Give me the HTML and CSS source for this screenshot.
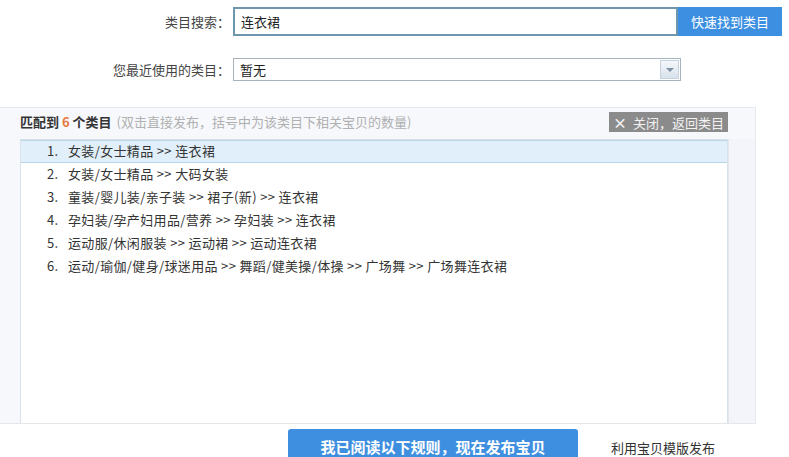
FILE: index.html
```html
<!DOCTYPE html>
<html>
<head>
    <meta charset="utf-8">
    <title>选择类目</title>
    <link rel="stylesheet" href="styles.css">
</head>
<body>
    <div class="search">
        <div class="row">
            <label class="label">类目搜索：</label>
            <input class="keyword" type="text" value="连衣裙">
            <button class="find-btn">快速找到类目</button>
        </div>
        <div class="row recent">
            <label class="label">您最近使用的类目：</label>
            <div class="select">
                <span>暂无</span>
                <span class="arrow"></span>
            </div>
        </div>
    </div>

    <div class="result">
        <div class="result-head">
            <span class="count">匹配到 <em>6</em> 个类目</span>
            <span class="tip">(双击直接发布，括号中为该类目下相关宝贝的数量)</span>
            <button class="close-btn"><b>×</b> 关闭，返回类目</button>
        </div>
        <div class="result-body">
            <div class="list">
                <div class="item active"><span class="num">1.</span>女装/女士精品 &gt;&gt; 连衣裙</div>
                <div class="item"><span class="num">2.</span>女装/女士精品 &gt;&gt; 大码女装</div>
                <div class="item"><span class="num">3.</span>童装/婴儿装/亲子装 &gt;&gt; 裙子(新) &gt;&gt; 连衣裙</div>
                <div class="item"><span class="num">4.</span>孕妇装/孕产妇用品/营养 &gt;&gt; 孕妇装 &gt;&gt; 连衣裙</div>
                <div class="item"><span class="num">5.</span>运动服/休闲服装 &gt;&gt; 运动裙 &gt;&gt; 运动连衣裙</div>
                <div class="item"><span class="num">6.</span>运动/瑜伽/健身/球迷用品 &gt;&gt; 舞蹈/健美操/体操 &gt;&gt; 广场舞 &gt;&gt; 广场舞连衣裙</div>
            </div>
            <div class="track"></div>
        </div>
    </div>

    <div class="footer">
        <button class="publish-btn">我已阅读以下规则，现在发布宝贝</button>
        <a class="tpl-link" href="#">利用宝贝模版发布</a>
    </div>
</body>
</html>
```

FILE: styles.css
```css
body {
    margin: 0;
    font-family: "Noto Sans CJK SC", "Microsoft YaHei", sans-serif;
    font-size: 12px;
    color: #333;
    background: #fff;
    overflow: hidden;
}
.search {
    padding-top: 7px;
}
.row {
    display: flex;
    align-items: center;
}
.label {
    width: 233px;
    text-align: right;
    font-size: 13px;
    color: #444;
    padding-right: 3px;
    box-sizing: border-box;
}
.keyword {
    width: 445px;
    height: 29px;
    margin: 0;
    padding: 0 6px;
    border: 2px solid #6e96ad;
    font-family: inherit;
    font-size: 13px;
    color: #222;
    box-sizing: border-box;
    outline: none;
}
.find-btn {
    width: 104px;
    height: 29px;
    border: none;
    background: #3d8fe1;
    color: #fff;
    font-family: inherit;
    font-size: 13px;
    padding: 0;
}
.recent {
    margin-top: 22px;
}
.select {
    width: 448px;
    height: 23px;
    border: 1px solid #a7b3bd;
    box-sizing: border-box;
    display: flex;
    align-items: center;
    justify-content: space-between;
    padding: 0 1px 0 6px;
    font-size: 13px;
    color: #222;
}
.arrow {
    width: 19px;
    height: 19px;
    border: 1px solid #c6d2dd;
    box-sizing: border-box;
    background: linear-gradient(#f4f7fa, #d8e2ec);
    position: relative;
}
.arrow::after {
    content: "";
    position: absolute;
    left: 5px;
    top: 7px;
    border-left: 4px solid transparent;
    border-right: 4px solid transparent;
    border-top: 4px solid #7f90a2;
}
.result {
    margin-top: 26px;
    width: 756px;
    background: #f6f8fc;
    border-top: 1px solid #e3e8ef;
    border-right: 1px solid #e6eaf0;
    border-bottom: 1px solid #e3e6ea;
    box-sizing: border-box;
}
.result-head {
    display: flex;
    align-items: flex-start;
    height: 31px;
    padding: 4px 0 0 20px;
    box-sizing: border-box;
}
.count {
    font-weight: bold;
    font-size: 13px;
    line-height: 19px;
    color: #333;
}
.count em {
    font-style: normal;
    color: #e8773a;
}
.tip {
    margin-left: 5px;
    font-size: 13px;
    line-height: 19px;
    color: #b0b0b0;
}
.close-btn {
    margin-left: auto;
    margin-right: 27px;
    width: 119px;
    height: 20px;
    border: none;
    background: #8b8b8b;
    color: #f2f2f2;
    font-family: inherit;
    font-size: 13px;
    padding: 0;
}
.close-btn b {
    font-size: 14px;
    margin-right: 3px;
}
.result-body {
    display: flex;
    height: 284px;
}
.list {
    margin-left: 20px;
    width: 708px;
    background: #fff;
    border: 1px solid #d9e1e9;
    border-bottom: none;
    box-sizing: border-box;
}
.item {
    display: flex;
    height: 23px;
    align-items: center;
    padding: 0 0 2px 26px;
    font-size: 13px;
    letter-spacing: 0.35px;
    color: #333;
    box-sizing: border-box;
    white-space: nowrap;
}
.item.active {
    background: #e1effa;
    border-top: 1px solid #b9d6e8;
    border-bottom: 1px solid #b9d6e8;
}
.num {
    width: 21px;
}
.track {
    flex: 1;
    background: #f3f5fa;
    border-left: 1px solid #e2e7ef;
}
.footer {
    display: flex;
    align-items: flex-start;
    padding-top: 5px;
}
.publish-btn {
    margin-left: 288px;
    width: 290px;
    height: 28px;
    border: none;
    border-radius: 3px 3px 0 0;
    background: #3f8fe0;
    color: #fff;
    font-family: inherit;
    font-size: 15px;
    font-weight: bold;
    line-height: 20px;
    padding: 8px 0 0;
}
.tpl-link {
    margin-left: 33px;
    margin-top: 9px;
    color: #333;
    text-decoration: none;
    font-size: 13px;
}
```
